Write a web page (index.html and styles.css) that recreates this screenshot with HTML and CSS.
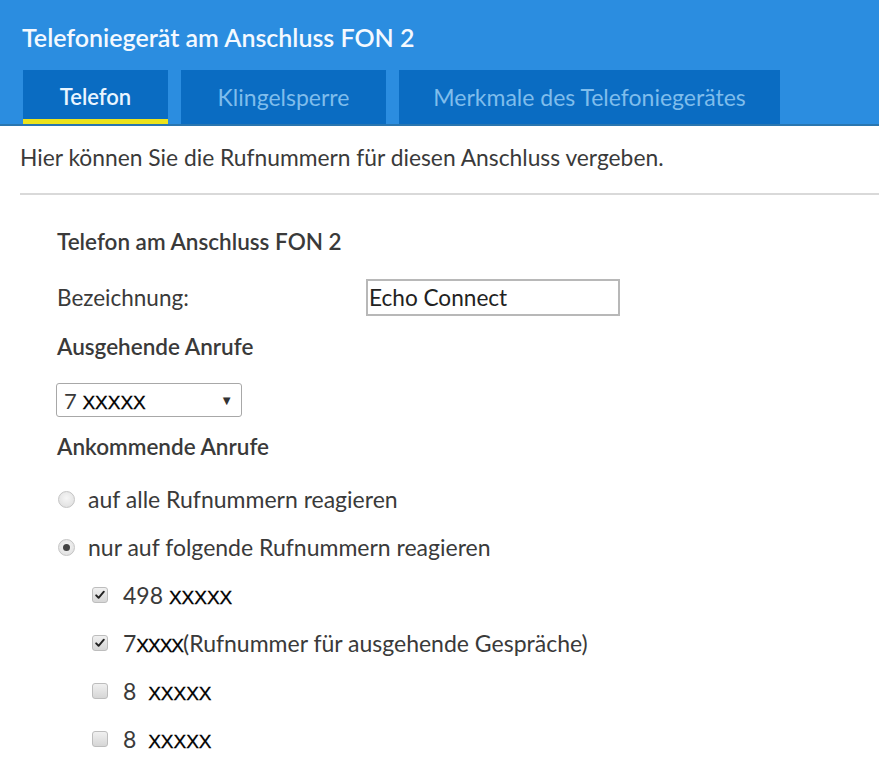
FILE: index.html
```html
<!DOCTYPE html>
<html lang="de">
<head>
<meta charset="utf-8">
<title>Telefoniegerät am Anschluss FON 2</title>
<link rel="stylesheet" href="styles.css">
</head>
<body>
<header class="header">
  <h1 class="title">Telefoniegerät am Anschluss FON 2</h1>
  <nav class="tabs">
    <div class="tab tab-telefon active">Telefon</div>
    <div class="tab tab-klingel">Klingelsperre</div>
    <div class="tab tab-merkmale">Merkmale des Telefoniegerätes</div>
  </nav>
</header>
<main class="content">
  <p class="intro">Hier können Sie die Rufnummern für diesen Anschluss vergeben.</p>
  <hr class="divider">
  <section class="form">
    <h2 class="heading">Telefon am Anschluss FON 2</h2>
    <div class="field-row">
      <span class="label">Bezeichnung:</span>
      <div class="text-input">Echo Connect</div>
    </div>
    <h2 class="heading">Ausgehende Anrufe</h2>
    <div class="select"><span class="num">7 <span class="redact">XXXXX</span></span><span class="arrow">▼</span></div>
    <h2 class="heading heading-in">Ankommende Anrufe</h2>
    <div class="option-row"><span class="radio"></span><span>auf alle Rufnummern reagieren</span></div>
    <div class="option-row"><span class="radio checked"></span><span>nur auf folgende Rufnummern reagieren</span></div>
    <div class="option-row sub"><span class="check checked"><svg viewBox="0 0 16 16" width="16" height="16"><path d="M3.6 8.4 L6.4 11.2 L12.4 4.2" fill="none" stroke="#222" stroke-width="2.2" stroke-linecap="round" stroke-linejoin="round"/></svg></span><span>498 <span class="redact">XXXXX</span></span></div>
    <div class="option-row sub"><span class="check checked"><svg viewBox="0 0 16 16" width="16" height="16"><path d="M3.6 8.4 L6.4 11.2 L12.4 4.2" fill="none" stroke="#222" stroke-width="2.2" stroke-linecap="round" stroke-linejoin="round"/></svg></span><span>7<span class="redact tight">XXXX</span>(Rufnummer für ausgehende Gespräche)</span></div>
    <div class="option-row sub"><span class="check"></span><span>8 &nbsp;<span class="redact">XXXXX</span></span></div>
    <div class="option-row sub"><span class="check"></span><span>8 &nbsp;<span class="redact">XXXXX</span></span></div>
  </section>
</main>
</body>
</html>
```
FILE: styles.css
```css
* { box-sizing: border-box; }
html, body { margin: 0; padding: 0; background: #fff; }
body {
  font-family: Lato, "Open Sans", sans-serif;
  color: #3a3a3a;
  width: 879px;
  overflow: hidden;
}
.header {
  background: #2b8de0;
  padding: 22px 0 0 0;
  border-bottom: 2px solid #2a76b0;
}
.title {
  margin: 0 0 18px 22px;
  font-size: 25px;
  line-height: 30px;
  font-weight: 600;
  color: #f4f9ff;
}
.tabs {
  display: flex;
  gap: 13px;
  margin-left: 23px;
}
.tab {
  position: relative;
  height: 54px;
  line-height: 54px;
  background: #0a6cc2;
  text-align: center;
  font-size: 23px;
  color: #7fbdec;
}
.tab.active { color: #e9f5ff; font-weight: 600; font-size: 22px; }
.tab.active::after {
  content: "";
  position: absolute;
  left: 0; right: 0; bottom: 0;
  height: 5px;
  background: #ece31c;
}
.tab-telefon { width: 145px; }
.tab-klingel { width: 205px; }
.tab-merkmale { width: 381px; }

.content { padding-left: 20px; }
.intro {
  margin: 0;
  padding-top: 17px;
  font-size: 22.8px;
  line-height: 28px;
  color: #3a3a3a;
}
.divider {
  margin: 22px 0 0 0;
  border: 0;
  height: 2px;
  background: #d9d9d9;
}
.form { padding-left: 37px; }
.heading {
  margin: 23px 0 0 0;
  font-size: 22.5px;
  line-height: 48px;
  font-weight: 600;
  color: #3a3a3a;
}
.field-row {
  display: flex;
  align-items: center;
  height: 48px;
  margin-top: 7px;
}
.label {
  width: 309px;
  font-size: 22.5px;
}
.text-input {
  width: 254px;
  height: 37px;
  border: 2px solid #b8b8b8;
  font-size: 22.6px;
  line-height: 33px;
  padding-left: 1px;
  color: #222;
}
.field-row + .heading { margin-top: 2px; }
.select {
  display: flex;
  align-items: center;
  justify-content: space-between;
  width: 186px;
  height: 34px;
  margin-top: 12px;
  border: 1px solid #a8a8a8;
  border-radius: 3px;
  padding: 0 8px 0 7px;
  font-size: 22px;
  margin-left: -1px;
}
.arrow { font-size: 13px; color: #333; }
.redact {
  font-family: "Liberation Sans", Arial, sans-serif;
  color: #000;
  font-size: 19px;
  -webkit-text-stroke: 0.3px #000;
}
.redact.tight { letter-spacing: -1px; }
.heading.heading-in { margin-top: 6px; }
.option-row {
  display: flex;
  align-items: center;
  height: 48px;
  font-size: 23px;
  margin-left: 1px;
}
.heading-in + .option-row { margin-top: 4px; }
.option-row.sub { margin-left: 35px; }
.option-row.sub + .option-row.sub { margin-top: 0; }
.radio {
  width: 17px;
  height: 17px;
  border-radius: 50%;
  border: 1px solid #c4c4c4;
  background: radial-gradient(circle at 50% 40%, #f6f6f6, #dcdcdc);
  margin-right: 13px;
  display: flex;
  align-items: center;
  justify-content: center;
}
.radio.checked::after {
  content: "";
  width: 7px;
  height: 7px;
  border-radius: 50%;
  background: #444;
}
.check {
  width: 16px;
  height: 16px;
  border-radius: 3px;
  border: 1px solid #bdbdbd;
  background: linear-gradient(#f0f0f0, #d6d6d6);
  margin-right: 15px;
  display: flex;
  align-items: center;
  justify-content: center;
}
.check svg { display: block; }
```
